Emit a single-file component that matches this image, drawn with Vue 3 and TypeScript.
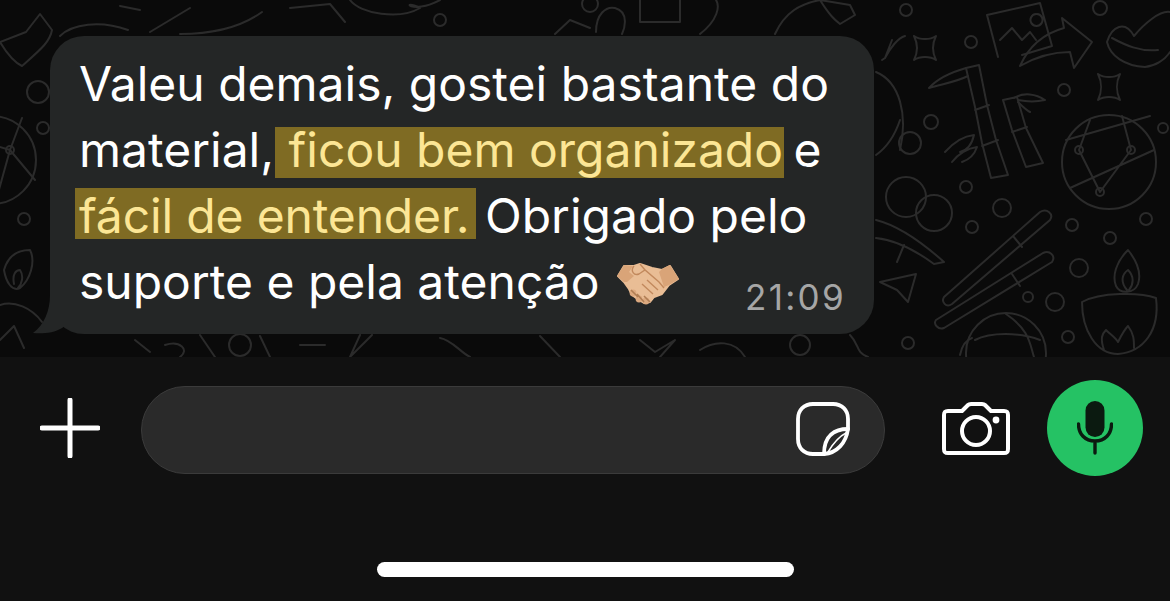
<template>
  <div class="screen">
    <section class="chat">
      <svg class="doodles" viewBox="0 0 1170 357" aria-hidden="true">
        <g fill="none" stroke="#2b2b2b" stroke-width="2" stroke-linecap="round" stroke-linejoin="round">
          <circle v-for="(c, i) in dots" :key="i" :cx="c[0]" :cy="c[1]" :r="c[2]" />
          <path v-for="(d, i) in shapes" :key="'s' + i" :d="d" />
        </g>
      </svg>

      <div class="bubble">
        <svg class="tail" viewBox="0 0 34 40" aria-hidden="true">
          <path d="M18 0 C18 16 12 30 1 38 C10 39 22 38 30 33 L34 30 V0 Z" fill="#242626" />
        </svg>
        <p class="message">
          Valeu demais, gostei bastante do material,<mark class="mark-first"> ficou bem organizado</mark> e
          <mark class="mark-second">fácil de entender.</mark> Obrigado pelo suporte e pela atenção
          <svg class="emoji" viewBox="-1 -1 64 45" aria-label="aperto de mãos">
            <path d="M1 13 L7 3 L17 3 L23 1 L35 5 L45 7 L53 3 L61 16 L52 22 L45 31 L37 34 L33 39 L27 40 L22 37 L15 32 L12 26 L7 19 Z" fill="#e9bd95" stroke="#e9bd95" stroke-width="2" stroke-linejoin="round" />
            <path d="M0 13 L7 2 L16 3 L12 9 L17 13 L10 19 L7 19 Z M62 16 L53 2 L45 6 L42 9 L47 24 L52 22 Z" fill="#d9a478" />
            <circle cx="16" cy="30" r="3.4" fill="#dca97f" />
            <circle cx="22" cy="36" r="3.4" fill="#dca97f" />
            <circle cx="29" cy="38" r="3.4" fill="#dca97f" />
            <path d="M17 3 C13 8 17 13 22 11 L28 7 L42 19 L47 25 M23 1 L28 7 M30 17 L41 27 M25 21 L36 31" fill="none" stroke="#c2895d" stroke-width="1.4" />
            <path d="M14 27 L21 34 M20 31 L27 39 M27 33 L33 39" fill="none" stroke="#b07e54" stroke-width="1.6" />
          </svg>
        </p>
        <time class="time">21:09</time>
      </div>
    </section>

    <footer class="composer">
      <div class="composer-row">
        <svg class="plus" viewBox="0 0 60 60" aria-label="Adicionar">
          <path d="M30 2 V58 M2 30 H58" stroke="#fff" stroke-width="5" stroke-linecap="round" />
        </svg>

        <div class="input">
          <svg class="sticker" viewBox="0 0 54 54" aria-label="Figurinha">
            <g fill="none" stroke="#fff" stroke-linecap="round" stroke-linejoin="round">
              <path d="M17 2 H37 C46 2 52 8 52 17 V27 C50 41 41 51 28 52 H17 C8 52 2 46 2 37 V17 C2 8 8 2 17 2 Z" stroke-width="3.8" />
              <path d="M52 27 C39 27 28 33 28 52" stroke-width="3.8" />
              <path d="M50 31 C44 34 38 40 32 50" stroke-width="1.5" />
            </g>
          </svg>
        </div>

        <svg class="camera" viewBox="0 0 68 53" aria-label="Câmera">
          <g fill="none" stroke="#fff" stroke-width="4" stroke-linejoin="round">
            <path d="M6 9 H20 L26 3 C27 2 28 2 29 2 H40 C41 2 42 2 43 3 L49 9 H62 C65 9 66 10 66 13 V47 C66 50 65 51 62 51 H6 C3 51 2 50 2 47 V13 C2 10 3 9 6 9 Z" />
            <circle cx="34" cy="29" r="14" />
          </g>
          <circle cx="54" cy="18" r="3.4" fill="#fff" />
        </svg>

        <button class="mic" aria-label="Gravar áudio">
          <svg viewBox="0 0 36 54" width="36" height="54">
            <rect x="8.5" y="0" width="19" height="36" rx="9.5" fill="#0b1a10" />
            <path d="M1.5 23 C1.5 33 8 40 18 40 C28 40 34.5 33 34.5 23 M18 40 V52" fill="none" stroke="#0b1a10" stroke-width="3.4" stroke-linecap="round" />
          </svg>
        </button>
      </div>
      <div class="home-bar"></div>
    </footer>
  </div>
</template>

<script setup lang="ts">
// cx, cy, r of the small rings in the wallpaper
const dots: number[][] = [
  [38, 92, 11], [43, 128, 6], [24, 219, 6], [440, 20, 6], [906, 10, 6], [971, 42, 6], [1064, 90, 6], [931, 122, 7],
  [910, 143, 11], [966, 187, 6], [1002, 208, 9], [972, 227, 6], [1072, 225, 6], [1110, 238, 6], [1146, 219, 6],
  [1079, 268, 9], [1028, 297, 5], [1055, 302, 9], [1068, 337, 6], [908, 343, 6], [1100, 8, 7], [906, 197, 20],
  [934, 213, 18], [1163, 128, 5], [1109, 162, 47], [1079, 150, 4], [1131, 150, 4], [1100, 192, 4], [-8, 160, 44],
  [10, 150, 4], [240, 345, 11], [800, 345, 10], [1006, 353, 40], [590, 4, 8],
]

const shapes: string[] = [
  // left side
  'M0 42 L26 32 L40 14 L52 30 C50 42 40 50 22 66 C14 62 6 52 0 42 Z',
  'M60 36 C72 24 100 20 128 30 M150 32 L190 8 M180 34 C210 34 240 28 262 12',
  'M4 270 C8 256 18 250 30 250 C36 262 30 280 20 288 C12 292 6 282 4 270 Z M14 284 C12 274 16 270 20 270 C24 276 22 284 18 288',
  'M0 305 C14 300 32 308 42 322 M0 340 L14 326 L24 348',
  // globe lines, left and right
  'M-40 135 L10 150 L35 180 M10 150 L-5 204 M10 150 L22 118',
  'M1066 140 L1150 116 M1070 188 L1154 150 M1079 150 L1100 192 L1131 150 L1122 116 M1079 150 L1090 120',
  // top strip, mostly hidden by the bubble
  'M290 8 L330 4 L345 22 M120 6 L140 10 M350 0 C360 14 400 20 420 8 C400 -2 410 16 440 0',
  'M555 34 L570 20 L590 28 M596 32 C596 14 606 6 615 8 C630 12 624 30 622 34 M640 0 V22 H680 V0 M700 34 C718 20 720 6 716 0',
  'M775 34 C785 12 800 4 820 0 L850 5 L855 15 L840 24 C835 20 830 16 820 0',
  // bottom strip
  'M135 340 L150 352 M165 345 C180 340 190 350 180 357 M200 335 L215 357 M260 336 L270 357 M300 345 L325 345 M360 335 L350 357 L372 335',
  'M440 338 C452 340 460 352 470 357 M540 336 L560 357 M640 340 L655 352 L675 340 L660 357 M700 350 C715 340 735 340 745 357 M850 335 C860 345 855 352 868 357',
  // orange behind the bubble
  'M876 72 C900 82 908 115 900 150 M876 155 C886 148 895 135 900 120 M892 40 L885 58 L882 60 M885 58 C890 48 898 38 905 36',
  // sparkles
  'M914 36 C920 40 930 40 936 36 C932 44 932 52 936 60 C930 56 920 56 914 60 C918 52 918 44 914 36 Z',
  'M1098 74 C1104 78 1114 78 1120 74 C1116 82 1116 92 1120 100 C1114 96 1104 96 1098 100 C1102 92 1102 82 1098 74 Z',
  // picture frame and arrow
  'M987 15 L1040 3 L1052 46 L1022 55 M998 57 L987 15 M1000 40 L1012 28 L1022 40 L1030 32 L1036 40 M1036 14 A6 6 0 1 0 1037 14',
  'M1020 66 C1028 48 1042 34 1064 28 L1062 18 L1092 42 L1074 68 L1070 52 C1052 52 1034 58 1020 66 Z',
  // heart-ish on the right edge
  'M1107 42 C1112 26 1125 20 1134 36 C1144 24 1160 10 1170 12 M1107 42 C1110 56 1125 66 1145 67 C1155 66 1165 60 1170 52 M1112 38 C1125 45 1140 52 1158 50',
  // bamboo: two stalks with nodes and leaves
  'M966 68 L975 107 L982 143 L991 178 L1008 175 L996 140 L987 105 L979 65 Z M975 110 L989 105 M982 146 L998 140',
  'M966 68 C952 72 938 78 929 88 C942 84 956 82 968 76',
  'M1003 100 L1012 130 L1026 167 L1043 163 L1026 128 L1017 97 Z M1012 132 L1027 127',
  'M1014 98 C1024 92 1036 94 1045 100 C1036 102 1028 102 1018 100 M1018 102 C1022 106 1026 110 1030 112',
  'M945 152 C954 142 964 136 974 135 C972 144 968 150 960 152 M952 162 C958 154 968 148 977 147 C974 156 968 160 962 162',
  // chopsticks
  'M936 320 L1043 253 C1050 250 1056 256 1052 262 L944 328 C938 330 933 324 936 320 Z M1012 274 L1020 286',
  'M944 297 L1040 212 C1047 208 1054 214 1050 220 L952 304 C946 308 941 302 944 297 Z M1013 236 L1022 247',
  // bread and plane
  'M876 220 C900 226 925 245 944 262 L934 264 C915 250 895 240 876 238 M904 245 L897 262',
  'M880 282 L916 274 L908 302 L897 290 Z',
  // lamp
  'M1128 250 C1116 262 1112 276 1116 286 C1120 294 1134 294 1138 284 C1142 272 1136 260 1128 250 Z M1127 290 C1120 282 1122 274 1128 270 C1134 276 1134 284 1129 290',
  'M1082 302 C1100 292 1140 292 1156 298 C1160 330 1144 352 1118 354 C1096 354 1082 330 1082 302 Z M1104 350 C1100 338 1102 334 1106 330 C1110 334 1116 338 1118 342 C1122 334 1124 330 1128 326 C1134 334 1134 340 1134 348',
  'M1006 314 C1030 330 1030 345 1034 357 M975 340 C990 332 1020 332 1040 340 M960 355 C962 345 966 340 972 338',
]
</script>

<style>
html,
body {
  margin: 0;
  background: #111111;
}
</style>

<style scoped>
.screen {
  width: 1170px;
  height: 601px;
  overflow: hidden;
  font-family: Inter, "Liberation Sans", sans-serif;
  background: #111111;
}

.chat {
  position: relative;
  height: 357px;
  padding: 36px 0 0 50px;
  box-sizing: border-box;
  background: #0a0a0a;
  overflow: hidden;
}

.doodles {
  position: absolute;
  inset: 0;
  width: 1170px;
  height: 357px;
}

.bubble {
  position: relative;
  width: 824px;
  height: 298px;
  box-sizing: border-box;
  padding: 15px 28px 0 29px;
  border-radius: 34px;
  background: #242626;
}

.tail {
  position: absolute;
  left: -18px;
  bottom: -1px;
  width: 34px;
  height: 40px;
}

.message {
  position: relative;
  margin: 0;
  color: #ffffff;
  font-size: 48px;
  line-height: 66px;
}

.mark-first,
.mark-second {
  color: #fce695;
  background-color: transparent;
  background-image: linear-gradient(#7f6b23, #7f6b23);
  background-repeat: no-repeat;
  background-size: 100% 51px;
}

.mark-first {
  margin: 0 -4px 0 1px;
  padding-right: 1px;
  white-space: pre-wrap;
  background-position: left 0 bottom 1px;
}

.mark-second {
  margin: 0 -4px 0 -4px;
  padding: 0 6px 0 4px;
  letter-spacing: -0.15px;
  background-position: left 0 bottom 6px;
}

.emoji {
  width: 64px;
  height: 45px;
  margin-left: 3px;
  vertical-align: -8px;
}

.time {
  position: absolute;
  right: 28px;
  bottom: 17px;
  color: #a6a6a6;
  font-size: 35px;
  line-height: 40px;
  letter-spacing: 2.3px;
}

.composer-row {
  display: flex;
  align-items: center;
  padding: 23px 27px 0 40px;
}

.plus {
  flex: none;
  width: 60px;
  height: 60px;
  margin-right: 41px;
}

.input {
  flex: none;
  display: flex;
  align-items: center;
  justify-content: flex-end;
  width: 744px;
  height: 88px;
  box-sizing: border-box;
  margin-top: 4px;
  padding-right: 34px;
  border: 1px solid #3b3b3b;
  border-radius: 44px;
  background: #2a2a2a;
}

.sticker {
  width: 54px;
  height: 54px;
  margin-top: -3px;
}

.camera {
  flex: none;
  width: 68px;
  height: 53px;
  margin-left: 57px;
  margin-right: 37px;
}

.mic {
  flex: none;
  display: flex;
  align-items: center;
  justify-content: center;
  width: 96px;
  height: 96px;
  padding: 0;
  border: none;
  border-radius: 50%;
  background: #25c264;
}

.home-bar {
  width: 417px;
  height: 15px;
  margin: 86px auto 0;
  border-radius: 8px;
  background: #ffffff;
}
</style>
